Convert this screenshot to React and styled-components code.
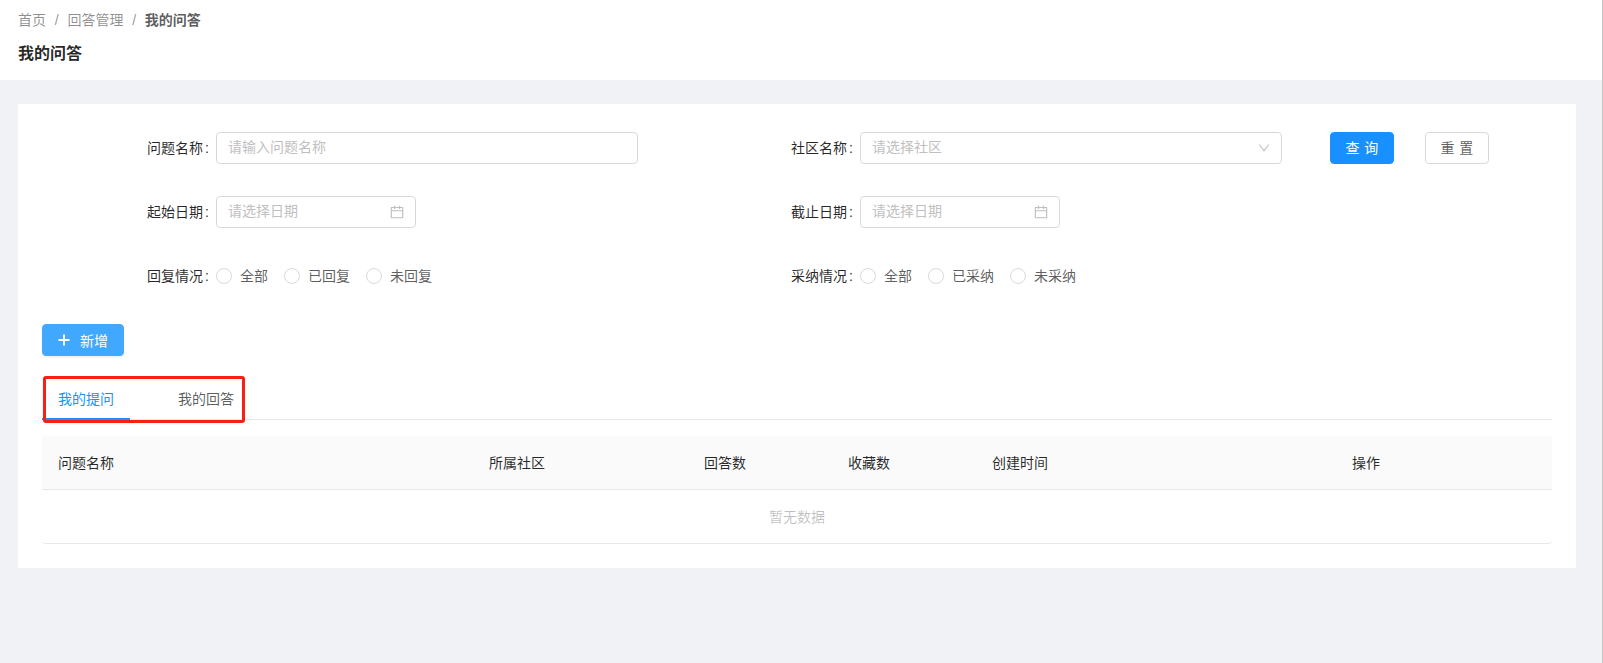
import React from 'react';
import styled, { createGlobalStyle } from 'styled-components';

const GlobalStyle = createGlobalStyle`
  html, body {
    margin: 0;
    padding: 0;
    background: #f0f2f5;
  }
  body {
    font-family: "Liberation Sans", "Noto Sans CJK SC", sans-serif;
    font-size: 14px;
    color: rgba(0, 0, 0, 0.85);
  }
  * {
    box-sizing: border-box;
  }
`;

const filterRows = [
  { label: '问题名称', type: 'input', placeholder: '请输入问题名称' },
  { label: '社区名称', type: 'select', placeholder: '请选择社区' },
  { label: '起始日期', type: 'date', placeholder: '请选择日期' },
  { label: '截止日期', type: 'date', placeholder: '请选择日期' },
  { label: '回复情况', type: 'radio', options: ['全部', '已回复', '未回复'] },
  { label: '采纳情况', type: 'radio', options: ['全部', '已采纳', '未采纳'] },
];

const columns = ['问题名称', '所属社区', '回答数', '收藏数', '创建时间', '操作'];

function CalendarIcon() {
  return (
    <svg viewBox="64 64 896 896" width="14" height="14" fill="#bfbfbf">
      <path d="M880 184H712v-64c0-4.4-3.6-8-8-8h-56c-4.4 0-8 3.6-8 8v64H384v-64c0-4.4-3.6-8-8-8h-56c-4.4 0-8 3.6-8 8v64H144c-17.7 0-32 14.3-32 32v664c0 17.7 14.3 32 32 32h736c17.7 0 32-14.3 32-32V216c0-17.7-14.3-32-32-32zm-40 656H184V460h656v380zM184 392V256h128v48c0 4.4 3.6 8 8 8h56c4.4 0 8-3.6 8-8v-48h256v48c0 4.4 3.6 8 8 8h56c4.4 0 8-3.6 8-8v-48h128v136H184z" />
    </svg>
  );
}

function DownIcon() {
  return (
    <svg viewBox="64 64 896 896" width="12" height="12" fill="#bfbfbf">
      <path d="M884 256h-75c-5.1 0-9.9 2.5-12.9 6.6L512 654.2 227.9 262.6c-3-4.1-7.8-6.6-12.9-6.6h-75c-6.5 0-10.3 7.4-6.5 12.7l352.6 486.1c12.8 17.6 39 17.6 51.7 0l352.6-486.1c3.9-5.3.1-12.7-6.4-12.7z" />
    </svg>
  );
}

function PlusIcon() {
  return (
    <svg viewBox="0 0 12 12" width="12" height="12" fill="#fff">
      <rect x="5" y="0.5" width="2" height="11" />
      <rect x="0.5" y="5" width="11" height="2" />
    </svg>
  );
}

function FilterControl({ item }) {
  if (item.type === 'input') {
    return <TextInput placeholder={item.placeholder} />;
  }
  if (item.type === 'select') {
    return (
      <PickerBox>
        <PickerInput placeholder={item.placeholder} readOnly />
        <DownIcon />
      </PickerBox>
    );
  }
  if (item.type === 'date') {
    return (
      <PickerBox $width="200px">
        <PickerInput placeholder={item.placeholder} readOnly />
        <CalendarIcon />
      </PickerBox>
    );
  }
  return (
    <RadioGroup>
      {item.options.map((opt) => (
        <RadioItem key={opt}>
          <RadioCircle />
          <RadioText>{opt}</RadioText>
        </RadioItem>
      ))}
    </RadioGroup>
  );
}

function FilterField({ item }) {
  return (
    <Field>
      <FieldLabel>
        {item.label}
        <Colon>:</Colon>
      </FieldLabel>
      <FilterControl item={item} />
    </Field>
  );
}

export default function App() {
  return (
    <Page>
      <GlobalStyle />
      <Header>
        <Breadcrumb>
          <Crumb>首页</Crumb>
          <CrumbSep>/</CrumbSep>
          <Crumb>回答管理</Crumb>
          <CrumbSep>/</CrumbSep>
          <Crumb $current>我的问答</Crumb>
        </Breadcrumb>
        <Title>我的问答</Title>
      </Header>
      <Card>
        <FilterGrid>
          <FilterField item={filterRows[0]} />
          <FilterField item={filterRows[1]} />
          <SearchButtons>
            <Button $primary><Spaced>查询</Spaced></Button>
            <Button><Spaced>重置</Spaced></Button>
          </SearchButtons>
          <FilterField item={filterRows[2]} />
          <FilterField item={filterRows[3]} />
          <span />
          <FilterField item={filterRows[4]} />
          <FilterField item={filterRows[5]} />
        </FilterGrid>
        <AddButton>
          <PlusIcon />
          <span>新增</span>
        </AddButton>
        <TabBar>
          <Tab $active>我的提问</Tab>
          <Tab>我的回答</Tab>
          <RedMark />
        </TabBar>
        <TableHead>
          {columns.map((c) => (
            <HeadCell key={c}>{c}</HeadCell>
          ))}
        </TableHead>
        <EmptyRow>暂无数据</EmptyRow>
      </Card>
    </Page>
  );
}

const Page = styled.div`
  min-height: 663px;
  padding-bottom: 95px;
  background: #f0f2f5;
  border-right: 1px solid #c4c4c4;
`;

const Header = styled.div`
  height: 80px;
  padding: 9px 18px 0;
  background: #fff;
`;

const Breadcrumb = styled.div`
  display: flex;
  align-items: center;
  height: 22px;
  line-height: 22px;
`;

const Crumb = styled.span`
  color: ${(p) => (p.$current ? 'rgba(0, 0, 0, 0.65)' : 'rgba(0, 0, 0, 0.45)')};
  font-weight: ${(p) => (p.$current ? 700 : 400)};
`;

const CrumbSep = styled.span`
  margin: 0 8.75px;
  color: rgba(0, 0, 0, 0.45);
`;

const Title = styled.div`
  margin-top: 11px;
  font-size: 16px;
  line-height: 24px;
  font-weight: 700;
  color: rgba(0, 0, 0, 0.85);
`;

const Card = styled.div`
  margin: 24px 26px 0 18px;
  padding: 28px 24px 24px;
  background: #fff;
`;

const FilterGrid = styled.div`
  display: grid;
  grid-template-columns: 596px 596px auto;
  column-gap: 48px;
  row-gap: 32px;
`;

const Field = styled.div`
  display: flex;
  align-items: center;
  height: 32px;
`;

const FieldLabel = styled.label`
  flex: none;
  width: 167px;
  margin-right: 7px;
  padding-bottom: 2px;
  text-align: right;
  color: rgba(0, 0, 0, 0.85);
`;

const Colon = styled.span`
  margin-left: 2px;
`;

const TextInput = styled.input`
  flex: 1;
  min-width: 0;
  height: 32px;
  padding: 0 11px 2px;
  border: 1px solid #d9d9d9;
  border-radius: 4px;
  outline: none;
  font: inherit;
  background: #fff;

  &::placeholder {
    color: #bfbfbf;
  }
`;

const PickerBox = styled.div`
  display: flex;
  align-items: center;
  flex: ${(p) => (p.$width ? 'none' : 1)};
  width: ${(p) => p.$width || 'auto'};
  height: 32px;
  padding: 0 11px;
  border: 1px solid #d9d9d9;
  border-radius: 4px;
  background: #fff;
`;

const PickerInput = styled.input`
  flex: 1;
  min-width: 0;
  padding: 0 0 2px;
  border: 0;
  outline: none;
  font: inherit;
  background: transparent;

  &::placeholder {
    color: #bfbfbf;
  }
`;

const RadioGroup = styled.div`
  display: flex;
  align-items: center;
  gap: 16px;
`;

const RadioItem = styled.label`
  display: flex;
  align-items: center;
  gap: 8px;
  color: rgba(0, 0, 0, 0.65);
`;

const RadioText = styled.span`
  padding-bottom: 2px;
`;

const RadioCircle = styled.span`
  width: 16px;
  height: 16px;
  border: 1px solid #d9d9d9;
  border-radius: 50%;
  background: #fff;
`;

const SearchButtons = styled.div`
  display: flex;
  gap: 31px;
`;

const Button = styled.button`
  width: 64px;
  height: 32px;
  padding: 0 0 2px;
  border: 1px solid ${(p) => (p.$primary ? '#1890ff' : '#d9d9d9')};
  border-radius: 4px;
  background: ${(p) => (p.$primary ? '#1890ff' : '#fff')};
  color: ${(p) => (p.$primary ? '#fff' : 'rgba(0, 0, 0, 0.65)')};
  font: inherit;
`;

const Spaced = styled.span`
  letter-spacing: 0.34em;
  margin-right: -0.34em;
`;

const AddButton = styled.button`
  display: flex;
  align-items: center;
  justify-content: center;
  gap: 10px;
  width: 82px;
  height: 32px;
  margin-top: 32px;
  padding: 0;
  border: 1px solid #40a9ff;
  border-radius: 4px;
  background: #40a9ff;
  box-shadow: 0 2px 0 rgba(0, 0, 0, 0.045);
  color: #fff;
  font: inherit;
`;

const TabBar = styled.div`
  position: relative;
  display: flex;
  gap: 32px;
  height: 44px;
  margin-top: 20px;
  border-bottom: 1px solid #e8e8e8;
`;

const Tab = styled.div`
  height: 44px;
  padding: 0 16px;
  line-height: 46px;
  color: ${(p) => (p.$active ? '#1890ff' : 'rgba(0, 0, 0, 0.65)')};
  border-bottom: 2px solid ${(p) => (p.$active ? '#1890ff' : 'transparent')};
`;

const RedMark = styled.div`
  position: absolute;
  left: 1px;
  top: 0;
  width: 202px;
  height: 47px;
  border: 3px solid #fa1e14;
  border-radius: 3px;
  pointer-events: none;
`;

const TableHead = styled.div`
  display: grid;
  grid-template-columns: 431px 215px 144px 144px 360px 216px;
  height: 54px;
  margin-top: 16px;
  background: #fafafa;
  border-bottom: 1px solid #e8e8e8;
  border-radius: 4px 4px 0 0;
`;

const HeadCell = styled.div`
  padding: 0 16px;
  line-height: 55px;
  color: rgba(0, 0, 0, 0.85);
`;

const EmptyRow = styled.div`
  height: 54px;
  line-height: 55px;
  text-align: center;
  color: rgba(0, 0, 0, 0.25);
  border-bottom: 1px solid #e8e8e8;
  border-radius: 0 0 4px 4px;
`;
